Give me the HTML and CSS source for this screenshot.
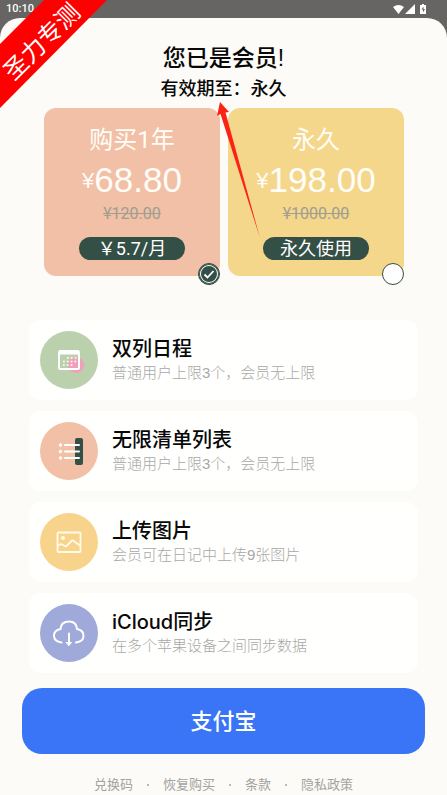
FILE: index.html
```html
<!DOCTYPE html>
<html lang="zh-CN">
<head>
<meta charset="utf-8">
<meta name="viewport" content="width=device-width, initial-scale=1">
<title>会员</title>
<link rel="stylesheet" href="styles.css">
</head>
<body>
<header class="status">
  <span>10:10</span>
  <svg class="status-icons" width="34" height="11" viewBox="0 0 34 11" fill="#fff" aria-hidden="true">
    <path d="M0 3Q5.500 -1 11 3L5.500 10Z"/>
    <path d="M22 0V10H12Z"/>
    <path d="M27 1h2V0h2v1h2v9h-6Z"/>
    <path d="M30.500 2.500L28.500 5.500H30V8.500L32 5H30.500Z" fill="#666563"/>
  </svg>
</header>
<div class="ribbon"><span>圣力专测</span></div>
<main class="sheet">
  <h1 class="title">您已是会员!</h1>
  <p class="expiry">有效期至：永久</p>

  <form class="plans">
    <label class="plan plan-year">
      <span class="plan-name">购买1年</span>
      <span class="price"><span class="yen">¥</span>68.80</span>
      <s class="old">¥120.00</s>
      <span class="pill">￥5.7/月</span>
      <input class="pick" type="radio" name="plan" checked>
      <svg class="tick" viewBox="0 0 22 22" fill="none" aria-hidden="true"><path d="M6.500 11.500L9.500 14.500L15.500 8" stroke="#fff" stroke-width="1.800"/></svg>
    </label>
    <label class="plan plan-life">
      <span class="plan-name">永久</span>
      <span class="price"><span class="yen">¥</span>198.00</span>
      <s class="old">¥1000.00</s>
      <span class="pill">永久使用</span>
      <input class="pick" type="radio" name="plan">
    </label>
    <svg class="arrow" width="46" height="138" viewBox="0 0 46 138" aria-hidden="true">
      <path d="M4 0L13 10L9.500 10.500L44 136L4.500 12L1 14Z" fill="#fb2414"/>
    </svg>
  </form>

  <ul class="features">
    <li class="feature">
      <svg class="badge green" viewBox="0 0 58 58" fill="none" aria-hidden="true">
        <circle cx="36" cy="34" r="8" fill="#f0a0b8"/>
        <rect x="19" y="20" width="20" height="18" rx="1.500" stroke="#fff" stroke-width="2"/>
        <path d="M19 21.500H39" stroke="#fff" stroke-width="4"/>
        <path d="M27 27H36.500M23 30.500H36.500M23 34H33" stroke="#fff" stroke-width="1.500" stroke-dasharray="1.800 2"/>
      </svg>
      <div><h2>双列日程</h2><p>普通用户上限3个，会员无上限</p></div>
    </li>
    <li class="feature">
      <svg class="badge peach" viewBox="0 0 58 58" fill="none" aria-hidden="true">
        <rect x="35" y="16" width="8" height="27" rx="2" fill="#344f45"/>
        <g stroke="#fff" stroke-width="2" stroke-linecap="round"><path d="M25 23H39M25 29.500H39M25 36H39"/></g>
        <g fill="#fff"><circle cx="20.500" cy="23" r="1.700"/><circle cx="20.500" cy="29.500" r="1.700"/><circle cx="20.500" cy="36" r="1.700"/></g>
      </svg>
      <div><h2>无限清单列表</h2><p>普通用户上限3个，会员无上限</p></div>
    </li>
    <li class="feature">
      <svg class="badge yellow" viewBox="0 0 58 58" fill="none" stroke="#fffbe9" stroke-width="1.800" stroke-linejoin="round" aria-hidden="true">
        <rect x="17.500" y="19.500" width="23" height="19.500" rx="1"/>
        <circle cx="23" cy="25" r="2" fill="#fffbe9" stroke="none"/>
        <path d="M18 33Q20 30.500 22 31.500L26 33.500L32 27.500Q33.500 27 35 29L40 32.500"/>
      </svg>
      <div><h2>上传图片</h2><p>会员可在日记中上传9张图片</p></div>
    </li>
    <li class="feature">
      <svg class="badge violet" viewBox="0 0 58 58" fill="none" stroke="#fff" stroke-width="2" stroke-linecap="round" aria-hidden="true">
        <path d="M21.500 38.500Q14 37.500 14 31.500Q14 26.500 20.500 25Q21 17.500 29 17.500Q36.500 17.500 37 25Q43.500 26 43.500 32Q43.500 37.500 36 38.500"/>
        <path d="M29 29.500V40"/>
        <path d="M26.500 38.500H31.500L29 41.500Z" fill="#fff" stroke-width="1"/>
      </svg>
      <div><h2>iCloud同步</h2><p>在多个苹果设备之间同步数据</p></div>
    </li>
  </ul>

  <button class="pay" type="button">支付宝</button>

  <nav class="links">
    <a href="#redeem">兑换码</a><i class="dot"></i>
    <a href="#restore">恢复购买</a><i class="dot"></i>
    <a href="#terms">条款</a><i class="dot"></i>
    <a href="#privacy">隐私政策</a>
  </nav>
</main>
</body>
</html>
```
FILE: styles.css
```css
* { box-sizing: border-box; }

body {
  margin: 0;
  min-height: 100vh;
  position: relative;
  overflow-x: hidden;
  background: #666563;
  color: #080808;
  font-family: "Liberation Sans", "Noto Sans CJK SC", sans-serif;
}

h1, h2, p, ul { margin: 0; padding: 0; }

.status {
  display: flex;
  justify-content: space-between;
  align-items: center;
  height: 18px;
  padding: 0 20px 0 6px;
  color: #fff;
  font: 500 11px/18px Roboto, sans-serif;
}

.sheet {
  min-height: calc(100vh - 18px);
  padding-top: 23px;
  border-radius: 20px 20px 0 0;
  background: #fcfbf7;
}

/* Corner ribbon laid over the page */
.ribbon {
  position: absolute;
  top: 0;
  left: 0;
  width: 108px;
  height: 108px;
  display: grid;
  place-items: center;
}

.ribbon::before {
  content: "";
  position: absolute;
  inset: 0;
  background: #fe0000;
  clip-path: polygon(44px 0, 107px 0, 0 108px, 0 44px);
}

.ribbon span {
  color: #fff;
  font-size: 24px;
  line-height: 20px;
  white-space: nowrap;
  transform: translate(-12px, -12px) rotate(-45deg);
}

.title {
  font-size: 23px;
  line-height: 34px;
  font-weight: 500;
  text-align: center;
}

.expiry {
  font-size: 18px;
  line-height: 28px;
  font-weight: 500;
  text-align: center;
}

.plans {
  position: relative;
  display: grid;
  grid-template-columns: 1fr 1fr;
  gap: 8px;
  padding: 0 43px 0 44px;
  margin-top: 5px;
}

.plan {
  position: relative;
  display: flex;
  flex-direction: column;
  align-items: center;
  padding: 13px 0 16px;
  border-radius: 12px;
  color: #fffdf8;
  font-family: Roboto, "Noto Sans CJK SC", sans-serif;
}

.plan-year { background: #f1c0a6; }
.plan-life { background: #f4d78b; }

.plan-name { font-size: 24px; line-height: 38px; }

.price {
  font-family: "Liberation Sans", sans-serif;
  font-size: 35px;
  line-height: 42px;
}

.yen { font-size: 22px; vertical-align: 4px; }

.old {
  color: #a09e90;
  font-size: 16px;
  line-height: 24px;
}

.pill {
  width: 60%;
  margin-top: 11px;
  border-radius: 12px;
  background: #344f45;
  color: #fff;
  font-size: 18px;
  line-height: 23px;
  text-align: center;
}

.pick, .tick {
  position: absolute;
  right: 0;
  bottom: -9px;
  width: 22px;
  height: 22px;
}

.pick {
  appearance: none;
  margin: 0;
  border: 1px solid #344f45;
  border-radius: 50%;
  background: #fff;
}

.pick:checked {
  background: #344f45;
  box-shadow: inset 0 0 0 1px #344f45, inset 0 0 0 2px #fff;
}

.tick { pointer-events: none; }

.arrow {
  position: absolute;
  top: -6px;
  left: calc(50% - 8px);
  pointer-events: none;
}

.features {
  display: grid;
  gap: 11px;
  margin-top: 44px;
  padding: 0 29px;
  list-style: none;
}

.feature {
  display: flex;
  align-items: center;
  gap: 14px;
  height: 80px;
  padding: 0 11px;
  border-radius: 12px;
  background: #fffffe;
}

.badge {
  flex: none;
  width: 58px;
  height: 58px;
  border-radius: 50%;
}

.green { background: #bbd0ad; }
.peach { background: #f1c0a6; }
.yellow { background: #f8d38b; }
.violet { background: #9fa9da; }

.feature h2 {
  font-size: 20px;
  line-height: 26px;
  font-weight: 500;
  font-family: Inter, "Noto Sans CJK SC", sans-serif;
}

.feature p {
  color: #a8a8a8;
  font-size: 15px;
  line-height: 22px;
  font-weight: 300;
}

.pay {
  display: block;
  width: calc(100% - 44px);
  height: 66px;
  margin: 15px auto 0;
  padding: 0 0 4px;
  border: 0;
  border-radius: 20px;
  background: #3975f6;
  color: #fff;
  font-family: inherit;
  font-size: 22px;
  font-weight: 500;
}

.links {
  display: flex;
  justify-content: center;
  align-items: center;
  gap: 14px;
  margin-top: 21px;
  font-size: 13px;
  line-height: 20px;
}

.links a { color: #a3a3a1; text-decoration: none; }

.dot {
  width: 2px;
  height: 2px;
  border-radius: 50%;
  background: #a3a3a1;
}
```
